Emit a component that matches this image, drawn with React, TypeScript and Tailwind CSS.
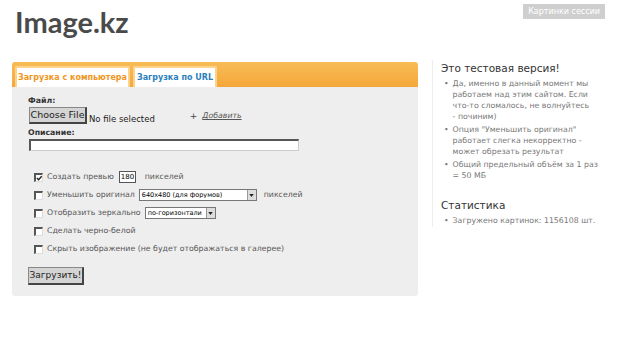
import React from "react";

function Box({ checked }: { checked?: boolean }) {
  return (
    <span className="relative inline-block w-[9px] h-[9px] bg-white border-l-2 border-t-2 border-l-[#555] border-t-[#555] border-r border-b border-r-[#ddd] border-b-[#ddd] shrink-0">
      {checked && (
        <svg viewBox="0 0 8 8" className="absolute left-0 top-0 w-[7px] h-[7px]">
          <path d="M1 3.5 L3 5.5 L6.5 1.5" stroke="#222" strokeWidth="1.6" fill="none" />
        </svg>
      )}
    </span>
  );
}

function Select({ label, w }: { label: string; w: string }) {
  return (
    <span className={`inline-flex items-center h-[12px] bg-white border border-[#777] ${w}`}>
      <span className="flex-1 pl-[2px] text-[6.5px] text-black leading-none whitespace-nowrap overflow-hidden">{label}</span>
      <span className="w-[9px] h-[10px] bg-[#ddd] border-l border-[#999] flex items-center justify-center shrink-0">
        <svg viewBox="0 0 6 4" className="w-[5px] h-[3px]">
          <path d="M0 0 L6 0 L3 4 Z" fill="#222" />
        </svg>
      </span>
    </span>
  );
}

function Bullet({ lines, last }: { lines: string[]; last?: boolean }) {
  return (
    <li className={`flex gap-[4px] ${last ? "" : "mb-[2px]"}`}>
      <span className="pl-[3px]">•</span>
      <span className="whitespace-nowrap">
        {lines.map((l, i) => (
          <span key={i} className="block">
            {l}
          </span>
        ))}
      </span>
    </li>
  );
}

export default function App() {
  return (
    <div className="w-[620px] h-[343px] bg-white overflow-hidden font-['DejaVu_Sans',sans-serif] text-[#555]">
      {/* Header */}
      <div className="flex items-start justify-between h-[60px]">
        <div className="pl-[15px] pt-[3px] font-['Lato',sans-serif] font-bold text-[29px] leading-[38px] text-[#4a4a4a]">
          Image.kz
        </div>
        <div className="mr-[15px] mt-[4px] h-[15px] px-[5px] bg-[#cfcfcf] text-white text-[8px] leading-[15px]">
          Картинки сессии
        </div>
      </div>

      <div className="flex">
        {/* Upload panel */}
        <div className="ml-[12px] mt-[2px] w-[406px]">
          <div className="h-[25px] rounded-t-[3px] bg-gradient-to-b from-[#f8bc55] to-[#f5a73a] flex items-end pl-[3px] gap-[3px]">
            <div className="h-[21px] w-[115px] bg-white border-2 border-b-0 border-[#fbd38d] rounded-t-[2px] flex items-center justify-center text-[8px] font-bold text-[#f0961c]">
              Загрузка с компьютера
            </div>
            <div className="h-[21px] w-[84px] bg-white border-2 border-b-0 border-[#fbd38d] rounded-t-[2px] flex items-center justify-center text-[8px] font-bold text-[#2b80bd]">
              Загрузка по URL
            </div>
          </div>
          <div className="h-[209px] bg-[#eeeeee] rounded-b-[3px] pl-[16px] pt-[9px] text-[7.8px]">
            <div className="font-bold text-[#333] leading-[10px]">Файл:</div>
            <div className="flex items-end h-[18px]">
              <span className="h-[17px] w-[58px] ml-[1px] bg-[#d4d4d4] border border-[#888] border-r-2 border-b-2 border-r-[#444] border-b-[#444] text-[9.5px] text-[#222] whitespace-nowrap flex items-center justify-center">
                Choose File
              </span>
              <span className="ml-[2px] text-[#222] text-[8.5px] leading-[10px] whitespace-nowrap">No file selected</span>
              <span className="ml-[35px] mb-[3px] text-[#444] text-[9px] leading-[10px]">+</span>
              <span className="ml-[5px] mb-[3px] underline italic text-[#555] leading-[10px]">Добавить</span>
            </div>
            <div className="mt-[4px] font-bold text-[#333] leading-[10px]">Описание:</div>
            <div className="ml-[1px] mt-[1px] w-[270px] h-[12px] bg-white border-t-2 border-l-2 border-[#555] border-r border-b border-r-[#ccc] border-b-[#ccc]" />

            <div className="mt-[17px] pl-[6px] flex flex-col text-[#555]">
              <div className="flex items-center h-[18px] gap-[4px]">
                <Box checked />
                <span>Создать превью</span>
                <span className="ml-[1px] w-[17px] h-[12px] bg-white border border-[#555] text-[7px] text-black leading-[10px] pl-[1px]">180</span>
                <span className="ml-[5px]">пикселей</span>
              </div>
              <div className="flex items-center h-[18px] gap-[4px]">
                <Box />
                <span>Уменьшить оригинал</span>
                <Select label="640x480 (для форумов)" w="w-[118px]" />
                <span className="ml-[3px]">пикселей</span>
              </div>
              <div className="flex items-center h-[18px] gap-[4px]">
                <Box />
                <span>Отобразить зеркально</span>
                <Select label="по-горизонтали" w="w-[71px]" />
              </div>
              <div className="flex items-center h-[18px] gap-[4px]">
                <Box />
                <span>Сделать черно-белой</span>
              </div>
              <div className="flex items-center h-[18px] gap-[4px]">
                <Box />
                <span>Скрыть изображение (не будет отображаться в галерее)</span>
              </div>
            </div>

            <div className="mt-[9px] h-[18px] w-[56px] bg-[#d4d4d4] border border-[#888] border-r-2 border-b-2 border-r-[#444] border-b-[#444] text-[9px] text-[#222] flex items-center justify-center">
              Загрузить!
            </div>
          </div>
        </div>

        {/* Sidebar */}
        <div className="ml-[14px] h-[167px] border-l border-[#eeeeee] pl-[8px] w-[180px]">
          <div className="pt-[1px] text-[10.5px] text-[#333] leading-[14px]">Это тестовая версия!</div>
          <ul className="mt-[3px] text-[7.8px] leading-[11px] text-[#777]">
            <Bullet
              lines={[
                "Да, именно в данный момент мы",
                "работаем над этим сайтом. Если",
                "что-то сломалось, не волнуйтесь",
                "- починим)",
              ]}
            />
            <Bullet
              lines={[
                'Опция "Уменьшить оригинал"',
                "работает слегка некорректно -",
                "может обрезать результат",
              ]}
            />
            <Bullet last lines={["Общий предельный объём за 1 раз", "= 50 МБ"]} />
          </ul>
          <div className="mt-[17px] text-[10.5px] text-[#333] leading-[14px]">Статистика</div>
          <ul className="mt-[3px] text-[7.8px] leading-[11px] text-[#777]">
            <Bullet last lines={["Загружено картинок: 1156108 шт."]} />
          </ul>
        </div>
      </div>
    </div>
  );
}
